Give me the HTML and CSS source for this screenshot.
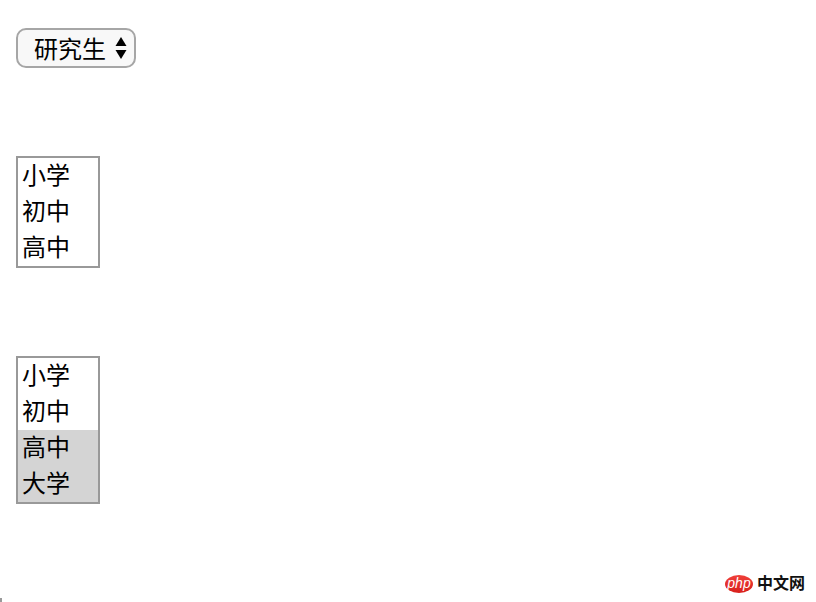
FILE: index.html
```html
<!DOCTYPE html>
<html lang="zh-CN">
<head>
    <meta charset="UTF-8">
    <title>select</title>
    <link rel="stylesheet" href="styles.css">
</head>
<body>

<div class="dropdown">
    <span class="dropdown-text">研究生</span>
    <svg class="arrows" width="12" height="22" viewBox="0 0 12 22">
        <path d="M6 0 L11.5 9 L0.5 9 Z"/>
        <path d="M0.5 13 L11.5 13 L6 22 Z"/>
    </svg>
</div>

<div class="listbox">
    <div class="option">小学</div>
    <div class="option">初中</div>
    <div class="option">高中</div>
</div>

<div class="listbox">
    <div class="option">小学</div>
    <div class="option">初中</div>
    <div class="option selected">高中</div>
    <div class="option selected">大学</div>
</div>

<div class="watermark">
    <span class="php-badge">php</span>
    <span class="watermark-text">中文网</span>
</div>

<div class="corner-mark"></div>

</body>
</html>
```

FILE: styles.css
```css
body {
    margin: 0;
    padding: 28px 0 0 16px;
    height: 602px;
    box-sizing: border-box;
    overflow: hidden;
    background-color: #ffffff;
    color: #000000;
    font-family: "Liberation Sans", "Noto Sans CJK SC", sans-serif;
    font-size: 24px;
    display: flex;
    flex-direction: column;
    align-items: flex-start;
    gap: 88px;
}

.dropdown {
    box-sizing: border-box;
    width: 120px;
    height: 40px;
    padding: 0 7px 0 16px;
    display: flex;
    align-items: center;
    justify-content: space-between;
    background-color: #f8f8f8;
    border: 2px solid #a6a6a6;
    border-radius: 10px;
}

.dropdown-text {
    margin-bottom: 2px;
}

.arrows {
    fill: #000000;
}

.listbox {
    width: 80px;
    border: 2px solid #999999;
    background-color: #ffffff;
}

.option {
    height: 36px;
    line-height: 36px;
    padding-left: 4px;
}

.selected {
    background-color: #d4d4d4;
}

.watermark {
    position: absolute;
    left: 725px;
    top: 574px;
    display: flex;
    align-items: center;
    gap: 4px;
}

.php-badge {
    width: 28px;
    height: 18px;
    border-radius: 50%;
    background: linear-gradient(#f0403a, #d8201c);
    color: #ffffff;
    font-size: 14px;
    font-style: italic;
    line-height: 16px;
    text-align: center;
}

.watermark-text {
    font-size: 16px;
    font-weight: bold;
    line-height: 20px;
    color: #111111;
}

.corner-mark {
    position: absolute;
    left: 0;
    top: 598px;
    width: 2px;
    height: 4px;
    background-color: #999999;
}
```
